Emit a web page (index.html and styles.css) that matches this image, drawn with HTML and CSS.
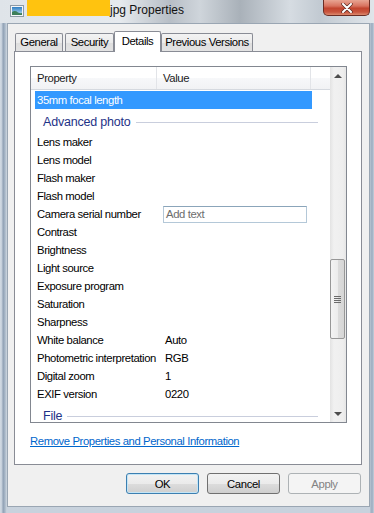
FILE: index.html
```html
<!DOCTYPE html>
<html lang="en">
<head>
    <meta charset="UTF-8">
    <title>jpg Properties</title>
    <link rel="stylesheet" href="styles.css">
</head>
<body>

    <div class="window">
        <!-- title bar -->
        <div class="titlebar">
            <svg class="file-icon" width="14" height="12" viewBox="0 0 14 12">
                <defs>
                    <linearGradient id="sky" x1="0" y1="0" x2="0" y2="1">
                        <stop offset="0" stop-color="#2f7fc4"/>
                        <stop offset="1" stop-color="#bfe0f2"/>
                    </linearGradient>
                </defs>
                <rect x="0.5" y="0.5" width="13" height="11" fill="#f4f6f8" stroke="#8d9aa6"/>
                <rect x="2" y="2" width="10" height="8" fill="url(#sky)"/>
                <path d="M2 10 L2 7 Q5 5 8 7.5 Q10 8.5 12 8 L12 10 Z" fill="#3d7f5a"/>
            </svg>
            <span class="redact"></span>
            <span class="title">jpg Properties</span>
            <div class="close-btn">
                <svg width="12" height="10" viewBox="0 0 12 10">
                    <path d="M2 1 L10 9 M10 1 L2 9" stroke="#5a2a22" stroke-width="3.4" stroke-linecap="round"/>
                    <path d="M2 1 L10 9 M10 1 L2 9" stroke="#ffffff" stroke-width="2" stroke-linecap="round"/>
                </svg>
            </div>
        </div>

        <div class="client">
            <div class="tabs">
                <div class="tab tab-general">General</div>
                <div class="tab tab-security">Security</div>
                <div class="tab tab-details active">Details</div>
                <div class="tab tab-versions">Previous Versions</div>
            </div>

            <div class="panel">
                <div class="listview">
                    <div class="list-body">
                        <div class="list-header">
                            <div class="col-name">Property</div>
                            <div class="col-value">Value</div>
                            <div class="col-rest"></div>
                        </div>

                        <div class="row selected"><div class="cell-name">35mm focal length</div><div class="cell-value"></div></div>
                        <div class="group"><span>Advanced photo</span><div class="group-line"></div></div>
                        <div class="row"><div class="cell-name">Lens maker</div><div class="cell-value"></div></div>
                        <div class="row"><div class="cell-name">Lens model</div><div class="cell-value"></div></div>
                        <div class="row"><div class="cell-name">Flash maker</div><div class="cell-value"></div></div>
                        <div class="row"><div class="cell-name">Flash model</div><div class="cell-value"></div></div>
                        <div class="row">
                            <div class="cell-name">Camera serial number</div>
                            <div class="cell-edit"><div class="textbox">Add text</div></div>
                        </div>
                        <div class="row"><div class="cell-name">Contrast</div><div class="cell-value"></div></div>
                        <div class="row"><div class="cell-name">Brightness</div><div class="cell-value"></div></div>
                        <div class="row"><div class="cell-name">Light source</div><div class="cell-value"></div></div>
                        <div class="row"><div class="cell-name">Exposure program</div><div class="cell-value"></div></div>
                        <div class="row"><div class="cell-name">Saturation</div><div class="cell-value"></div></div>
                        <div class="row"><div class="cell-name">Sharpness</div><div class="cell-value"></div></div>
                        <div class="row"><div class="cell-name">White balance</div><div class="cell-value">Auto</div></div>
                        <div class="row"><div class="cell-name">Photometric interpretation</div><div class="cell-value">RGB</div></div>
                        <div class="row"><div class="cell-name">Digital zoom</div><div class="cell-value">1</div></div>
                        <div class="row"><div class="cell-name">EXIF version</div><div class="cell-value">0220</div></div>
                        <div class="group"><span>File</span><div class="group-line"></div></div>
                    </div>

                    <div class="scrollbar">
                        <div class="arrow arrow-up"></div>
                        <div class="track">
                            <div class="thumb">
                                <div class="grip"></div>
                            </div>
                        </div>
                        <div class="arrow arrow-down"></div>
                    </div>
                </div>

                <a class="remove-link" href="#">Remove Properties and Personal Information</a>
            </div>

            <div class="buttons">
                <button class="btn default">OK</button>
                <button class="btn">Cancel</button>
                <button class="btn" disabled>Apply</button>
            </div>
        </div>
    </div>

</body>
</html>
```

FILE: styles.css
```css
body {
    margin: 0;
    width: 374px;
    height: 513px;
    overflow: hidden;
    font-family: "Liberation Sans", Arial, sans-serif;
    font-size: 11.3px;
    letter-spacing: -0.4px;
    color: #000;
}
.window {
    height: 513px;
    background:
        linear-gradient(90deg, #d3dbe4 0, #c2cdd9 2px, #8e9fb3 3px, #a9b8c8 5px, #cfd8e1 7px, rgba(0,0,0,0) 7px),
        linear-gradient(270deg, #c4cfdb 0, #9aabbf 2px, #b9c5d2 4px, rgba(0,0,0,0) 4px),
        linear-gradient(#e2e7ec, #d2dae3 40%, #c8d2dd);
}
.titlebar {
    height: 23px;
    display: flex;
    align-items: flex-start;
    background: linear-gradient(90deg, #dfe4e9 0, #e6eaee 120px, #b7bec6 170px, #cfd5db 200px, #a9b1b9 240px, #d6dce2 290px, #c2cad2 320px, #e0e5ea 374px);
}
.file-icon {
    margin: 5px 3px 0 10px;
}
.redact {
    width: 83px;
    height: 16px;
    background: #ffc30f;
}
.title {
    font-size: 12px;
    letter-spacing: 0;
    line-height: 20px;
    color: #111;
}
.close-btn {
    margin-left: auto;
    margin-right: 4px;
    width: 47px;
    height: 16px;
    box-sizing: border-box;
    border: 1px solid #6b2d24;
    border-top: none;
    border-radius: 0 0 5px 5px;
    background: linear-gradient(#e8a593 0, #d8735f 40%, #c2452f 55%, #c9553e 80%, #dc8a6f 100%);
    display: flex;
    align-items: center;
    justify-content: center;
}
.client {
    margin-left: 7px;
    width: 363px;
    height: 484px;
    box-sizing: border-box;
    border: 1px solid #9aa6b3;
    background-color: #f0f0f0;
    padding: 7px 7px 0 6px;
}
.tabs {
    height: 20px;
    display: flex;
    align-items: flex-end;
    position: relative;
    z-index: 1;
}
.tab {
    height: 18px;
    box-sizing: border-box;
    border: 1px solid #898c95;
    border-bottom: none;
    border-radius: 2px 2px 0 0;
    background: linear-gradient(#f3f3f3, #ebebeb 50%, #dedede 51%, #e3e3e3);
    text-align: center;
    line-height: 17px;
    white-space: nowrap;
}
.tab-general { width: 48px; margin-left: 1px; }
.tab-security { width: 49px; margin-left: 2px; }
.tab-details { width: 47px; }
.tab-versions { width: 92px; }
.tab.active {
    height: 21px;
    margin-bottom: -1px;
    background: #ffffff;
    line-height: 18px;
}
.panel {
    height: 414px;
    box-sizing: border-box;
    border: 1px solid #898c95;
    background-color: #ffffff;
    padding: 14px 14px 0 15px;
}
.listview {
    height: 357px;
    box-sizing: border-box;
    border: 1px solid #828790;
    display: flex;
}
.list-body {
    width: 299px;
    overflow: hidden;
}
.list-header {
    height: 22px;
    display: flex;
    border-bottom: 1px solid #d5d9df;
    background: linear-gradient(#ffffff, #ffffff 50%, #f7f8fa 51%, #f1f2f4);
    margin-bottom: 1px;
}
.list-header div {
    line-height: 22px;
    color: #1b1b1b;
}
.col-name {
    width: 126px;
    padding-left: 6px;
    box-sizing: border-box;
    border-right: 1px solid #e2e4e8;
}
.col-value {
    width: 154px;
    padding-left: 6px;
    box-sizing: border-box;
    border-right: 1px solid #e2e4e8;
}
.col-rest {
    flex: 1;
}
.row {
    width: 277px;
    height: 18px;
    margin-left: 4px;
    display: flex;
    align-items: center;
}
.row.selected {
    background-color: #3399ff;
    color: #ffffff;
}
.cell-name {
    width: 123px;
    padding-left: 2px;
    box-sizing: border-box;
    white-space: nowrap;
}
.cell-value {
    padding-left: 7px;
}
.cell-edit {
    padding-left: 5px;
}
.textbox {
    width: 144px;
    height: 17px;
    box-sizing: border-box;
    border: 1px solid #b4c8d8;
    border-top-color: #8ba5ba;
    padding-left: 2px;
    line-height: 15px;
    color: #6d6d6d;
    background: #ffffff;
}
.group {
    height: 24px;
    margin-left: 4px;
    width: 283px;
    display: flex;
    align-items: center;
    padding: 2px 0 0 8px;
    box-sizing: border-box;
    font-size: 12.5px;
    letter-spacing: -0.2px;
    color: #1e3287;
}
.group-line {
    flex: 1;
    height: 1px;
    margin-left: 5px;
    margin-top: 1px;
    background-color: #c9cedd;
}
.scrollbar {
    width: 16px;
    display: flex;
    flex-direction: column;
    background: linear-gradient(90deg, #e3e3e3, #f1f1f1 25%, #eeeeee 80%, #e6e6e6);
}
.arrow {
    height: 17px;
    position: relative;
}
.arrow::after {
    content: "";
    position: absolute;
    left: 4px;
    border-left: 4px solid transparent;
    border-right: 4px solid transparent;
}
.arrow-up::after {
    top: 7px;
    border-bottom: 4px solid #4d4d4d;
}
.arrow-down::after {
    top: 7px;
    border-top: 4px solid #4d4d4d;
}
.track {
    flex: 1;
    padding-top: 175px;
}
.thumb {
    height: 80px;
    margin: 0 1px 0 0;
    box-sizing: border-box;
    border: 1px solid #979797;
    border-radius: 2px;
    background: linear-gradient(90deg, #f3f3f3, #ececec 50%, #dcdcdc 51%, #d6d6d6);
    display: flex;
    align-items: center;
    justify-content: center;
}
.grip {
    width: 7px;
    height: 7px;
    background: repeating-linear-gradient(#6b6b6b 0, #6b6b6b 1px, transparent 1px, transparent 2px);
}
.remove-link {
    display: inline-block;
    margin-top: 11px;
    color: #0066cc;
    line-height: 14px;
}
.buttons {
    display: flex;
    justify-content: flex-end;
    gap: 8px;
    margin-top: 8px;
    padding-right: 1px;
}
.btn {
    width: 73px;
    height: 21px;
    padding: 0;
    border: 1px solid #707070;
    border-radius: 3px;
    background: linear-gradient(#f2f2f2, #ebebeb 50%, #dddddd 51%, #cfcfcf);
    font-family: inherit;
    font-size: 11.3px;
    letter-spacing: -0.4px;
    color: #000;
}
.btn.default {
    border-color: #3c7fb1;
    box-shadow: inset 0 0 0 1px #c4e5f6;
}
.btn:disabled {
    border-color: #adb2b5;
    background: #f4f4f4;
    color: #838383;
}
```
